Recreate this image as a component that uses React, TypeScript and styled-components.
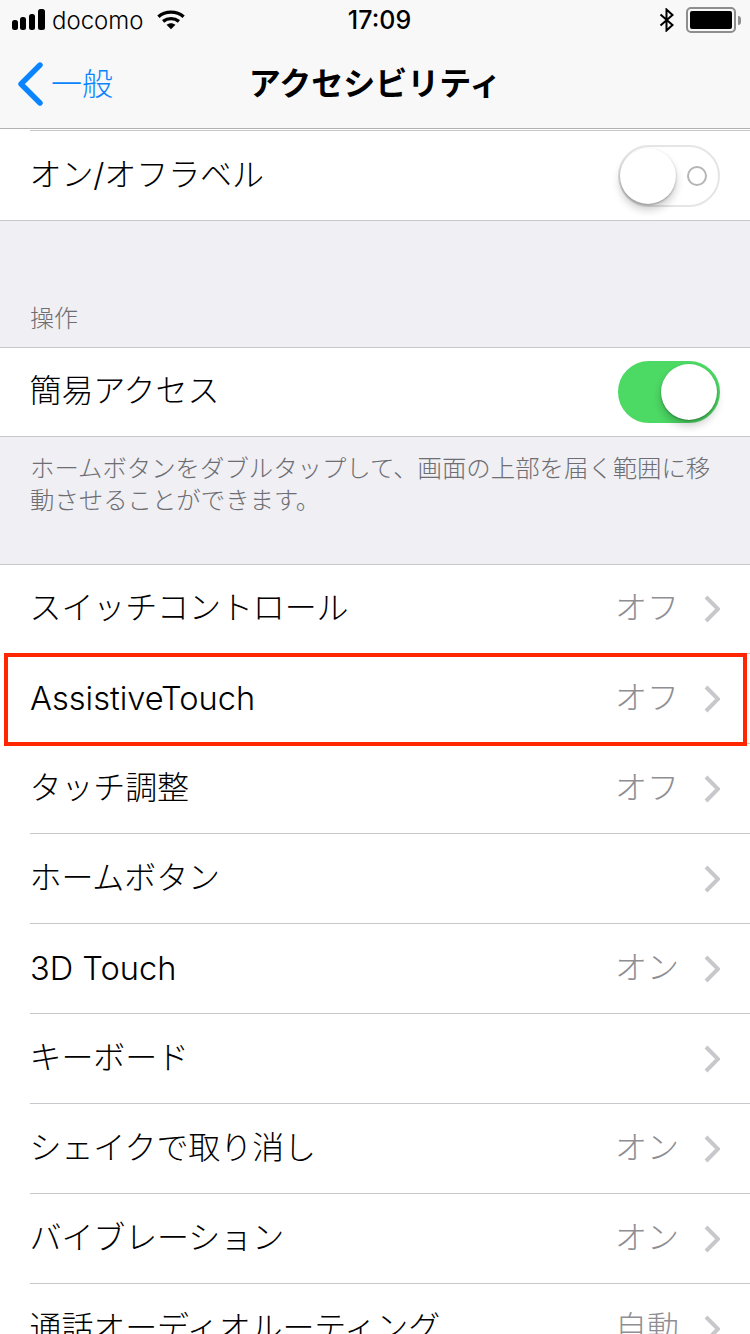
import React from 'react'
import styled, { createGlobalStyle } from 'styled-components'

const FONT = `Inter, "Noto Sans CJK JP", "Noto Sans", sans-serif`

const GlobalStyle = createGlobalStyle`
  html, body {
    margin: 0;
    padding: 0;
    background: #efeff4;
  }
  body {
    font-family: ${FONT};
    color: #000;
  }
`

const SignalIcon = () => (
  <svg width="34" height="22" viewBox="0 0 34 22">
    <rect x="0" y="11" width="6" height="10" rx="2.5" fill="#000" />
    <rect x="8" y="8" width="6" height="13" rx="2.5" fill="#000" />
    <rect x="17" y="5" width="6" height="16" rx="2.5" fill="#000" />
    <rect x="26" y="0" width="7" height="21" rx="2.5" fill="#000" />
  </svg>
)

const WifiIcon = () => (
  <svg width="28" height="22" viewBox="0 0 30 22">
    <path d="M1.5 7.5C9 .9 21 .9 28.5 7.5" fill="none" stroke="#000" strokeWidth="3.6" />
    <path d="M6.5 12.5c5-4 12-4 17 0" fill="none" stroke="#000" strokeWidth="3.6" />
    <path d="M10.2 16.2c3-2.3 6.6-2.3 9.6 0L15 21z" fill="#000" />
  </svg>
)

const BluetoothIcon = () => (
  <svg width="16" height="24" viewBox="0 0 16 24">
    <path d="M1.5 6.5 13.5 17 7.5 22.5V1.5l6 5.5L1.5 17.5" fill="none" stroke="#000" strokeWidth="2" />
  </svg>
)

const BackIcon = () => (
  <svg width="26" height="44" viewBox="0 0 26 44">
    <path d="M23 3 4 22l19 19" fill="none" stroke="#0a84ff" strokeWidth="5.4" strokeLinecap="round" strokeLinejoin="round" />
  </svg>
)

const ChevronIcon = () => (
  <svg width="16" height="28" viewBox="0 0 16 28">
    <path d="M2 2l12 12L2 26" fill="none" stroke="#c7c7cc" strokeWidth="4" />
  </svg>
)

const Page = styled.div`
  width: 750px;
  height: 1334px;
  overflow: hidden;
  background: #efeff4;
`

const Header = styled.header`
  background: #f8f8f8;
  border-bottom: 1px solid #b2b2b2;
  height: 128px;
`

const StatusBar = styled.div`
  display: grid;
  grid-template-columns: 1fr auto 1fr;
  align-items: center;
  height: 40px;
  padding: 0 9px 0 12px;
  font-size: 24px;
`

const StatusLeft = styled.div`
  display: flex;
  align-items: center;
  gap: 6px;
`

const StatusRight = styled.div`
  display: flex;
  align-items: center;
  justify-content: flex-end;
  gap: 11px;
`

const Carrier = styled.span`
  margin-right: 7px;
  font-weight: 300;
`

const Clock = styled.span`
  margin-left: 6px;
  font-size: 25px;
  font-weight: 500;
`

const Battery = styled.div`
  display: flex;
  align-items: center;
  gap: 2px;
`

const BatteryBody = styled.div`
  width: 42px;
  height: 18px;
  padding: 2px;
  border: 2px solid #8e8e8e;
  border-radius: 5px;
`

const BatteryFill = styled.div`
  height: 100%;
  background: #000;
  border-radius: 2px;
`

const BatteryNub = styled.div`
  width: 3px;
  height: 9px;
  background: #8e8e8e;
  border-radius: 0 3px 3px 0;
`

const NavBar = styled.nav`
  display: grid;
  grid-template-columns: 1fr auto 1fr;
  align-items: center;
  height: 88px;
  padding: 0 17px;
`

const BackLink = styled.div`
  display: flex;
  align-items: center;
  gap: 8px;
  color: #0a84ff;
  font-size: 31px;
  font-weight: 300;
`

const BackText = styled.span`
  padding-bottom: 6px;
`

const Title = styled.div`
  padding-bottom: 6px;
  font-size: 32px;
  font-weight: 700;
`

const Group = styled.section`
  background: #fff;
  border-bottom: 1px solid #c8c7cc;
`

const TopGroup = styled(Group)`
  padding-top: 1px;
`

const BorderedGroup = styled(Group)`
  border-top: 1px solid #c8c7cc;
`

const Row = styled.div<{ $first?: boolean }>`
  position: relative;
  display: flex;
  align-items: center;
  justify-content: space-between;
  box-sizing: border-box;
  height: ${(props) => (props.$first ? '88px' : '90px')};
  margin-left: 30px;
  padding-right: 30px;
  font-size: 32px;
  border-top: ${(props) => (props.$first ? 'none' : '1px solid #c8c7cc')};
`

const RowLabel = styled.span<{ $latin?: boolean }>`
  font-weight: 300;
  font-size: ${(props) => (props.$latin ? '32.6px' : '32px')};
  letter-spacing: ${(props) => (props.$latin ? '0' : '-0.1px')};
  margin-left: ${(props) => (props.$latin ? '0' : '-0.5px')};
  padding-bottom: ${(props) => (props.$latin ? '2px' : '8px')};
`

const RowRight = styled.div`
  display: flex;
  align-items: center;
  gap: 25px;
`

const RowValue = styled.span`
  color: #8e8e93;
  font-weight: 300;
  padding-bottom: 8px;
`

const Highlight = styled.div`
  position: absolute;
  z-index: 1;
  left: -26px;
  right: 3px;
  top: -1px;
  bottom: -3px;
  border: 4px solid #ff2600;
`

const SectionLabel = styled.div`
  height: 126px;
  box-sizing: border-box;
  padding: 0 30px 13px;
  display: flex;
  align-items: flex-end;
  font-size: 24px;
  color: #6d6d72;
  font-weight: 300;
`

const FooterNote = styled.div`
  height: 127px;
  box-sizing: border-box;
  padding: 15px 30px 0;
  font-size: 24.4px;
  line-height: 32px;
  color: #6d6d72;
  font-weight: 300;
`

const SwitchTrack = styled.div<{ $on?: boolean }>`
  position: relative;
  box-sizing: border-box;
  width: 102px;
  height: 62px;
  border-radius: 31px;
  background: ${(props) => (props.$on ? '#4cd964' : '#fff')};
  border: 2px solid ${(props) => (props.$on ? '#4cd964' : '#e5e5e5')};
`

const SwitchThumb = styled.div<{ $on?: boolean }>`
  position: absolute;
  top: 1px;
  left: ${(props) => (props.$on ? '41px' : '0')};
  width: 56px;
  height: 56px;
  border-radius: 50%;
  background: #fff;
  box-shadow: 0 6px 8px rgba(0, 0, 0, 0.2), 0 1px 2px rgba(0, 0, 0, 0.3);
`

const SwitchDot = styled.div`
  position: absolute;
  right: 11px;
  top: 19px;
  box-sizing: border-box;
  width: 20px;
  height: 20px;
  border-radius: 50%;
  border: 2px solid #b5b5b5;
`

const items = [
  { label: 'スイッチコントロール', value: 'オフ' },
  { label: 'AssistiveTouch', value: 'オフ', highlight: true, latin: true },
  { label: 'タッチ調整', value: 'オフ' },
  { label: 'ホームボタン' },
  { label: '3D Touch', value: 'オン', latin: true },
  { label: 'キーボード' },
  { label: 'シェイクで取り消し', value: 'オン' },
  { label: 'バイブレーション', value: 'オン' },
  { label: '通話オーディオルーティング', value: '自動' },
]

const App: React.FC = () => (
  <Page>
    <GlobalStyle />
    <Header>
      <StatusBar>
        <StatusLeft>
          <SignalIcon />
          <Carrier>docomo</Carrier>
          <WifiIcon />
        </StatusLeft>
        <Clock>17:09</Clock>
        <StatusRight>
          <BluetoothIcon />
          <Battery>
            <BatteryBody>
              <BatteryFill />
            </BatteryBody>
            <BatteryNub />
          </Battery>
        </StatusRight>
      </StatusBar>
      <NavBar>
        <BackLink>
          <BackIcon />
          <BackText>一般</BackText>
        </BackLink>
        <Title>アクセシビリティ</Title>
      </NavBar>
    </Header>

    <TopGroup>
      <Row>
        <RowLabel>オン/オフラベル</RowLabel>
        <SwitchTrack>
          <SwitchDot />
          <SwitchThumb />
        </SwitchTrack>
      </Row>
    </TopGroup>

    <SectionLabel>操作</SectionLabel>
    <BorderedGroup>
      <Row $first>
        <RowLabel>簡易アクセス</RowLabel>
        <SwitchTrack $on>
          <SwitchThumb $on />
        </SwitchTrack>
      </Row>
    </BorderedGroup>
    <FooterNote>ホームボタンをダブルタップして、画面の上部を届く範囲に移動させることができます。</FooterNote>

    <BorderedGroup>
      {items.map((item, i) => (
        <Row key={item.label} $first={i === 0}>
          <RowLabel $latin={item.latin}>{item.label}</RowLabel>
          <RowRight>
            {item.value && <RowValue>{item.value}</RowValue>}
            <ChevronIcon />
          </RowRight>
          {item.highlight && <Highlight />}
        </Row>
      ))}
    </BorderedGroup>
  </Page>
)

export default App
